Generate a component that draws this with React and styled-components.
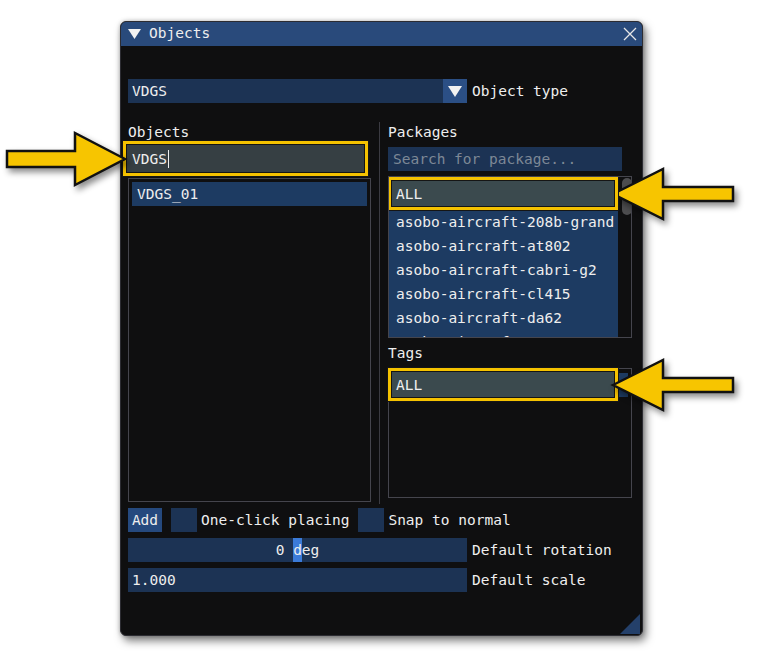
import React from "react";
import styled, { createGlobalStyle } from "styled-components";

const Global = createGlobalStyle`
  html, body { margin: 0; padding: 0; background: #ffffff; }
  body { font-family: "DejaVu Sans Mono", "Liberation Mono", monospace; }
  * { box-sizing: border-box; }
`;

const C = {
  win: "#0f0f10",
  title: "#294a7b",
  frame: "#1c3354",
  comboBtn: "#2b4f85",
  item: "#1d3b62",
  button: "#25497e",
  border: "#45454d",
  sep: "#3b3b42",
  grayInput: "#363f43",
  callout: "#3b4a4e",
  yellow: "#f5c200",
  text: "#eeeeee",
  placeholder: "#7d8896",
  select: "#3b7bd8",
};

const Page = styled.div`
  position: relative;
  width: 764px;
  height: 657px;
  padding: 21px 0 0 120px;
  font-size: 14.5px;
  color: ${C.text};
`;

const Window = styled.div`
  position: relative;
  width: 523px;
  height: 615px;
  background: ${C.win};
  border-radius: 6px;
  border: 1px solid #2c2c32;
  box-shadow: 3px 5px 9px rgba(0, 0, 0, 0.5), 0 0 4px rgba(0, 0, 0, 0.25);
  overflow: hidden;
`;

const TitleBar = styled.div`
  height: 25px;
  margin: -1px -1px 0 -1px;
  background: ${C.title};
  display: flex;
  align-items: center;
  padding: 0 6px 0 8px;
  gap: 8px;
  line-height: 1;
`;

const TitleText = styled.span`
  color: ${C.text};
`;

const CloseBox = styled.span`
  margin-left: auto;
  display: flex;
  align-items: center;
`;

const Body = styled.div`
  padding: 33px 11px 0 7px;
  display: flex;
  flex-direction: column;
`;

const Row = styled.div`
  display: flex;
  align-items: center;
  height: 24px;
  margin-top: ${(p) => p.$mt || 0}px;
  white-space: pre;
`;

const Combo = styled.div`
  display: flex;
  width: 339px;
  height: 24px;
`;

const ComboValue = styled.div`
  flex: 1;
  background: ${C.frame};
  display: flex;
  align-items: center;
  padding-left: 4px;
`;

const ComboButton = styled.div`
  width: 24px;
  background: ${C.comboBtn};
  display: flex;
  align-items: center;
  justify-content: center;
`;

const SideLabel = styled.span`
  margin-left: ${(p) => p.$ml ?? 5}px;
`;

const Columns = styled.div`
  margin-top: 19px;
  height: 382px;
  display: grid;
  grid-template-columns: 243px 1px 244px;
  column-gap: 8px;
`;

const Column = styled.div`
  display: flex;
  flex-direction: column;
  min-width: 0;
`;

const Separator = styled.div`
  background: ${C.sep};
`;

const Label = styled.div`
  height: 20px;
  line-height: 20px;
  margin-top: ${(p) => p.$mt || 0}px;
`;

const Callout = styled.div`
  display: flex;
  align-items: center;
  width: ${(p) => p.$w}px;
  height: ${(p) => p.$h}px;
  border: 3px solid ${C.yellow};
  background: ${(p) => p.$bg};
  box-shadow: 0 0 0 1px #151515, inset 0 0 0 1px #151515;
  padding-left: ${(p) => p.$pl}px;
  color: ${C.text};
`;

const ObjectsInput = styled(Callout)`
  margin: -1px 0 0 -5px;
`;

const Caret = styled.span`
  display: inline-block;
  width: 1px;
  height: 18px;
  background: #f0f0f0;
  margin-left: 1px;
`;

const ListBox = styled.div`
  border: 1px solid ${C.border};
  height: ${(p) => p.$h}px;
  margin-top: ${(p) => p.$mt}px;
  overflow: hidden;
  display: flex;
  position: relative;
`;

const PaddedList = styled.div`
  flex: 1;
  padding: 3px;
`;

const ListItem = styled.div`
  height: 24px;
  display: flex;
  align-items: center;
  padding-left: ${(p) => p.$pl || 4}px;
  background: ${C.item};
  white-space: pre;
`;

const SearchInput = styled.div`
  margin-top: 5px;
  width: 234px;
  height: 24px;
  background: ${C.frame};
  color: ${C.placeholder};
  display: flex;
  align-items: center;
  padding-left: 5px;
`;

const PackageContent = styled.div`
  flex: 1;
  background: ${C.item};
`;

const PackageAll = styled(Callout)`
  position: relative;
  z-index: 1;
  margin-left: -1px;
`;

const ScrollTrack = styled.div`
  width: 16px;
  padding: 1px 2px 0 4px;
  background: ${C.win};
`;

const ScrollGrab = styled.div`
  width: 10px;
  height: 37px;
  border-radius: 5px;
  background: #4d4d4f;
`;

const TagRow = styled.div`
  position: relative;
  margin: 4px 2px 0 3px;
  height: 24px;
  width: 236px;
  background: ${C.item};
`;

const TagCallout = styled(Callout)`
  position: absolute;
  top: -5px;
  left: -4px;
`;

const TagsBox = styled.div`
  border: 1px solid ${C.border};
  height: 130px;
  margin-top: 5px;
`;

const Button = styled.div`
  height: 24px;
  width: 34px;
  background: ${C.button};
  display: flex;
  align-items: center;
  justify-content: center;
`;

const Checkbox = styled.div`
  width: 26px;
  height: 24px;
  background: ${C.frame};
  margin-left: ${(p) => p.$ml}px;
`;

const Field = styled.div`
  width: 339px;
  height: 24px;
  background: ${C.frame};
  display: flex;
  align-items: center;
  justify-content: ${(p) => (p.$center ? "center" : "flex-start")};
  padding-left: ${(p) => (p.$center ? 0 : 4)}px;
  white-space: pre;
`;

const Selected = styled.span`
  background: ${C.select};
  display: inline-flex;
  align-items: center;
  height: 24px;
`;

const Grip = styled.svg`
  position: absolute;
  right: 1px;
  bottom: 0px;
`;

const ArrowSvg = styled.svg`
  position: absolute;
  left: ${(p) => p.$x}px;
  top: ${(p) => p.$y}px;
  overflow: visible;
  filter: drop-shadow(3px 4px 3px rgba(0, 0, 0, 0.45));
`;

const Tri = ({ w = 13, h = 10 }) => (
  <svg width={w} height={h} viewBox="0 0 13 10">
    <polygon points="0,0 13,0 6.5,10" fill="#f2f2f2" />
  </svg>
);

const ArrowLeft = ({ x, y }) => (
  <ArrowSvg $x={x} $y={y} width="130" height="62" viewBox="0 0 130 62">
    <path
      d="M4 30 L54 5 L54 23 L124 23 L124 37 L54 37 L54 55 Z"
      fill="#f7c500"
      stroke="#111"
      strokeWidth="2.5"
      strokeLinejoin="miter"
    />
  </ArrowSvg>
);

const ArrowRight = ({ x, y }) => (
  <ArrowSvg $x={x} $y={y} width="126" height="62" viewBox="0 0 126 62">
    <path
      d="M122 30 L72 4 L72 22 L4 22 L4 38 L72 38 L72 56 Z"
      fill="#f7c500"
      stroke="#111"
      strokeWidth="2.5"
      strokeLinejoin="miter"
    />
  </ArrowSvg>
);

const packages = [
  "asobo-aircraft-208b-grand",
  "asobo-aircraft-at802",
  "asobo-aircraft-cabri-g2",
  "asobo-aircraft-cl415",
  "asobo-aircraft-da62",
  "asobo-aircraft-e330",
];

export default function App() {
  return (
    <>
      <Global />
      <Page>
        <Window>
          <TitleBar>
            <Tri />
            <TitleText>Objects</TitleText>
            <CloseBox>
              <svg width="14" height="14" viewBox="0 0 14 14">
                <path d="M1 1 L13 13 M13 1 L1 13" stroke="#e6e6e6" strokeWidth="1.3" />
              </svg>
            </CloseBox>
          </TitleBar>
          <Body>
            <Row>
              <Combo>
                <ComboValue>VDGS</ComboValue>
                <ComboButton>
                  <Tri w={14} h={11} />
                </ComboButton>
              </Combo>
              <SideLabel>Object type</SideLabel>
            </Row>
            <Columns>
              <Column>
                <Label>Objects</Label>
                <ObjectsInput $w={245} $h={35} $bg={C.grayInput} $pl={6}>
                  VDGS<Caret />
                </ObjectsInput>
                <ListBox $h={324} $mt={2}>
                  <PaddedList>
                    <ListItem $pl={5}>VDGS_01</ListItem>
                  </PaddedList>
                </ListBox>
              </Column>
              <Separator />
              <Column>
                <Label>Packages</Label>
                <SearchInput>Search for package...</SearchInput>
                <ListBox $h={162} $mt={5}>
                  <PackageContent>
                    <PackageAll $w={230} $h={33} $bg={C.callout} $pl={5}>
                      ALL
                    </PackageAll>
                    {packages.map((p) => (
                      <ListItem key={p} $pl={7}>
                        {p}
                      </ListItem>
                    ))}
                  </PackageContent>
                  <ScrollTrack>
                    <ScrollGrab />
                  </ScrollTrack>
                </ListBox>
                <Label $mt={5}>Tags</Label>
                <TagsBox>
                  <TagRow>
                    <TagCallout $w={230} $h={33} $bg={C.callout} $pl={5}>
                      ALL
                    </TagCallout>
                  </TagRow>
                </TagsBox>
              </Column>
            </Columns>
            <Row $mt={4}>
              <Button>Add</Button>
              <Checkbox $ml={9} />
              <SideLabel $ml={4}>One-click placing</SideLabel>
              <Checkbox $ml={9} />
              <SideLabel $ml={4}>Snap to normal</SideLabel>
            </Row>
            <Row $mt={6}>
              <Field $center>
                0 <Selected>d</Selected>eg
              </Field>
              <SideLabel>Default rotation</SideLabel>
            </Row>
            <Row $mt={6}>
              <Field>1.000</Field>
              <SideLabel>Default scale</SideLabel>
            </Row>
          </Body>
          <Grip width="22" height="22" viewBox="0 0 22 22">
            <polygon points="21,1 21,21 1,21" fill="#24406a" />
          </Grip>
        </Window>
        <ArrowRight x={3} y={129} />
        <ArrowLeft x={609} y={164} />
        <ArrowLeft x={609} y={355} />
      </Page>
    </>
  );
}
